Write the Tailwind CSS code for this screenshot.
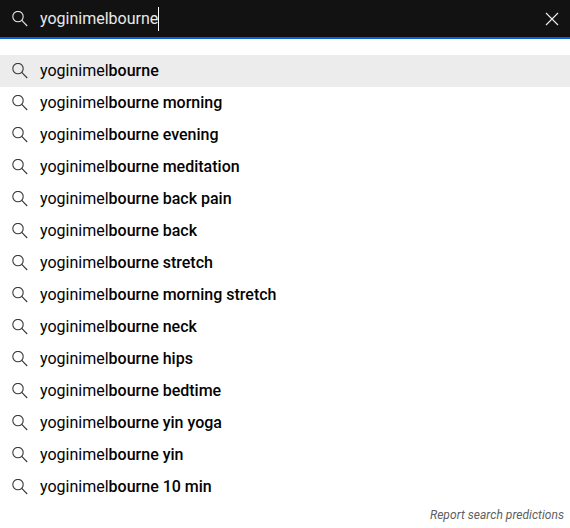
<!DOCTYPE html>
<html lang="en">
  <head>
    <meta charset="UTF-8" />
    <meta name="viewport" content="width=device-width, initial-scale=1.0" />
    <title>Search</title>
    <script src="https://cdn.jsdelivr.net/npm/@tailwindcss/browser@4"></script>
  </head>
  <body class="bg-white w-[570px] h-[528px] overflow-hidden font-['Roboto',sans-serif]">
    <!-- Search bar -->
    <div class="h-[39px] bg-[#121212] border-b-2 border-[#065fd4] flex items-center pl-[12px] pr-[11px]">
      <svg class="mt-[1px] w-[16px] h-[16px] text-[#e6e6e6] shrink-0" viewBox="0 0 16 16" fill="none" stroke="currentColor" stroke-width="1.1">
        <circle cx="6" cy="5.6" r="5.2" />
        <path d="M9.8 9.4 L15.2 15" />
      </svg>
      <div class="ml-[12px] text-[16px] text-[#e8e8e8] leading-[24px] border-r border-white">yoginimelbourne</div>
      <svg class="mt-[1px] ml-auto w-[14px] h-[14px] text-[#eeeeee]" viewBox="0 0 14 14" fill="none" stroke="currentColor" stroke-width="1.1">
        <path d="M1 1 L13 13 M13 1 L1 13" />
      </svg>
    </div>

    <!-- Suggestions -->
    <ul class="mt-[16px]">
      <li class="h-[32px] flex items-center pl-[12px] bg-[#ececec]">
        <svg class="w-[16px] h-[16px] text-[#3a3a3a] shrink-0" viewBox="0 0 16 16" fill="none" stroke="currentColor" stroke-width="1.1"><circle cx="6" cy="5.6" r="5.2" /><path d="M9.8 9.4 L15.2 15" /></svg>
        <span class="ml-[12px] text-[16px] text-[#030303]">yoginimel<b class="font-medium">bourne</b></span>
      </li>
      <li class="h-[32px] flex items-center pl-[12px]">
        <svg class="w-[16px] h-[16px] text-[#3a3a3a] shrink-0" viewBox="0 0 16 16" fill="none" stroke="currentColor" stroke-width="1.1"><circle cx="6" cy="5.6" r="5.2" /><path d="M9.8 9.4 L15.2 15" /></svg>
        <span class="ml-[12px] text-[16px] text-[#030303]">yoginimel<b class="font-medium">bourne morning</b></span>
      </li>
      <li class="h-[32px] flex items-center pl-[12px]">
        <svg class="w-[16px] h-[16px] text-[#3a3a3a] shrink-0" viewBox="0 0 16 16" fill="none" stroke="currentColor" stroke-width="1.1"><circle cx="6" cy="5.6" r="5.2" /><path d="M9.8 9.4 L15.2 15" /></svg>
        <span class="ml-[12px] text-[16px] text-[#030303]">yoginimel<b class="font-medium">bourne evening</b></span>
      </li>
      <li class="h-[32px] flex items-center pl-[12px]">
        <svg class="w-[16px] h-[16px] text-[#3a3a3a] shrink-0" viewBox="0 0 16 16" fill="none" stroke="currentColor" stroke-width="1.1"><circle cx="6" cy="5.6" r="5.2" /><path d="M9.8 9.4 L15.2 15" /></svg>
        <span class="ml-[12px] text-[16px] text-[#030303]">yoginimel<b class="font-medium">bourne meditation</b></span>
      </li>
      <li class="h-[32px] flex items-center pl-[12px]">
        <svg class="w-[16px] h-[16px] text-[#3a3a3a] shrink-0" viewBox="0 0 16 16" fill="none" stroke="currentColor" stroke-width="1.1"><circle cx="6" cy="5.6" r="5.2" /><path d="M9.8 9.4 L15.2 15" /></svg>
        <span class="ml-[12px] text-[16px] text-[#030303]">yoginimel<b class="font-medium">bourne back pain</b></span>
      </li>
      <li class="h-[32px] flex items-center pl-[12px]">
        <svg class="w-[16px] h-[16px] text-[#3a3a3a] shrink-0" viewBox="0 0 16 16" fill="none" stroke="currentColor" stroke-width="1.1"><circle cx="6" cy="5.6" r="5.2" /><path d="M9.8 9.4 L15.2 15" /></svg>
        <span class="ml-[12px] text-[16px] text-[#030303]">yoginimel<b class="font-medium">bourne back</b></span>
      </li>
      <li class="h-[32px] flex items-center pl-[12px]">
        <svg class="w-[16px] h-[16px] text-[#3a3a3a] shrink-0" viewBox="0 0 16 16" fill="none" stroke="currentColor" stroke-width="1.1"><circle cx="6" cy="5.6" r="5.2" /><path d="M9.8 9.4 L15.2 15" /></svg>
        <span class="ml-[12px] text-[16px] text-[#030303]">yoginimel<b class="font-medium">bourne stretch</b></span>
      </li>
      <li class="h-[32px] flex items-center pl-[12px]">
        <svg class="w-[16px] h-[16px] text-[#3a3a3a] shrink-0" viewBox="0 0 16 16" fill="none" stroke="currentColor" stroke-width="1.1"><circle cx="6" cy="5.6" r="5.2" /><path d="M9.8 9.4 L15.2 15" /></svg>
        <span class="ml-[12px] text-[16px] text-[#030303]">yoginimel<b class="font-medium">bourne morning stretch</b></span>
      </li>
      <li class="h-[32px] flex items-center pl-[12px]">
        <svg class="w-[16px] h-[16px] text-[#3a3a3a] shrink-0" viewBox="0 0 16 16" fill="none" stroke="currentColor" stroke-width="1.1"><circle cx="6" cy="5.6" r="5.2" /><path d="M9.8 9.4 L15.2 15" /></svg>
        <span class="ml-[12px] text-[16px] text-[#030303]">yoginimel<b class="font-medium">bourne neck</b></span>
      </li>
      <li class="h-[32px] flex items-center pl-[12px]">
        <svg class="w-[16px] h-[16px] text-[#3a3a3a] shrink-0" viewBox="0 0 16 16" fill="none" stroke="currentColor" stroke-width="1.1"><circle cx="6" cy="5.6" r="5.2" /><path d="M9.8 9.4 L15.2 15" /></svg>
        <span class="ml-[12px] text-[16px] text-[#030303]">yoginimel<b class="font-medium">bourne hips</b></span>
      </li>
      <li class="h-[32px] flex items-center pl-[12px]">
        <svg class="w-[16px] h-[16px] text-[#3a3a3a] shrink-0" viewBox="0 0 16 16" fill="none" stroke="currentColor" stroke-width="1.1"><circle cx="6" cy="5.6" r="5.2" /><path d="M9.8 9.4 L15.2 15" /></svg>
        <span class="ml-[12px] text-[16px] text-[#030303]">yoginimel<b class="font-medium">bourne bedtime</b></span>
      </li>
      <li class="h-[32px] flex items-center pl-[12px]">
        <svg class="w-[16px] h-[16px] text-[#3a3a3a] shrink-0" viewBox="0 0 16 16" fill="none" stroke="currentColor" stroke-width="1.1"><circle cx="6" cy="5.6" r="5.2" /><path d="M9.8 9.4 L15.2 15" /></svg>
        <span class="ml-[12px] text-[16px] text-[#030303]">yoginimel<b class="font-medium">bourne yin yoga</b></span>
      </li>
      <li class="h-[32px] flex items-center pl-[12px]">
        <svg class="w-[16px] h-[16px] text-[#3a3a3a] shrink-0" viewBox="0 0 16 16" fill="none" stroke="currentColor" stroke-width="1.1"><circle cx="6" cy="5.6" r="5.2" /><path d="M9.8 9.4 L15.2 15" /></svg>
        <span class="ml-[12px] text-[16px] text-[#030303]">yoginimel<b class="font-medium">bourne yin</b></span>
      </li>
      <li class="h-[32px] flex items-center pl-[12px]">
        <svg class="w-[16px] h-[16px] text-[#3a3a3a] shrink-0" viewBox="0 0 16 16" fill="none" stroke="currentColor" stroke-width="1.1"><circle cx="6" cy="5.6" r="5.2" /><path d="M9.8 9.4 L15.2 15" /></svg>
        <span class="ml-[12px] text-[16px] text-[#030303]">yoginimel<b class="font-medium">bourne 10 min</b></span>
      </li>
    </ul>

    <div class="mt-[3px] pr-[6px] text-right text-[12px] italic tracking-[0.04px] text-[#606060]">Report search predictions</div>
  </body>
</html>
